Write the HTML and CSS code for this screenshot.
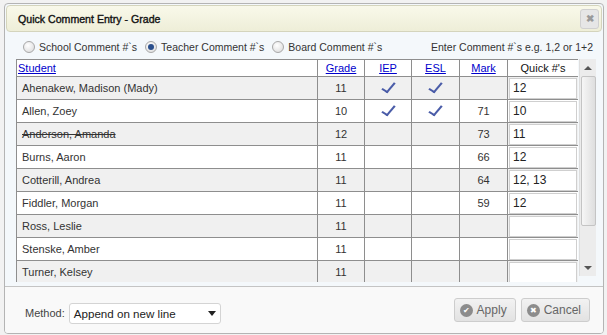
FILE: index.html
```html
<!DOCTYPE html>
<html lang="en">
<head>
    <meta charset="UTF-8">
    <title>Quick Comment Entry - Grade</title>
    <link rel="stylesheet" href="styles.css">
</head>
<body>
    <div class="dialog">
        <div class="titlebar">
            <span class="title">Quick Comment Entry - Grade</span>
            <span class="close-btn">&#10006;</span>
        </div>

        <div class="options">
            <label class="radio"><span class="dot"></span>School Comment #`s</label>
            <label class="radio"><span class="dot checked"></span>Teacher Comment #`s</label>
            <label class="radio"><span class="dot"></span>Board Comment #`s</label>
            <span class="hint">Enter Comment #`s e.g. 1,2 or 1+2</span>
        </div>

        <div class="grid-wrap">
            <div class="grid-scroll">
                <table class="grid">
                    <colgroup>
                        <col class="c-name">
                        <col class="c-grade">
                        <col class="c-flag">
                        <col class="c-flag2">
                        <col class="c-mark">
                        <col class="c-quick">
                    </colgroup>
                    <thead>
                        <tr>
                            <th class="h-name"><a href="#">Student</a></th>
                            <th><a href="#">Grade</a></th>
                            <th><a href="#">IEP</a></th>
                            <th><a href="#">ESL</a></th>
                            <th><a href="#">Mark</a></th>
                            <th>Quick #'s</th>
                        </tr>
                    </thead>
                    <tbody>
                        <tr><td>Ahenakew, Madison (Mady)</td><td>11</td><td><span class="tick"></span></td><td><span class="tick"></span></td><td></td><td><div class="qbox">12</div></td></tr>
                        <tr><td>Allen, Zoey</td><td>10</td><td><span class="tick"></span></td><td><span class="tick"></span></td><td>71</td><td><div class="qbox">10</div></td></tr>
                        <tr><td><s>Anderson, Amanda</s></td><td>12</td><td></td><td></td><td>73</td><td><div class="qbox">11</div></td></tr>
                        <tr><td>Burns, Aaron</td><td>11</td><td></td><td></td><td>66</td><td><div class="qbox">12</div></td></tr>
                        <tr><td>Cotterill, Andrea</td><td>11</td><td></td><td></td><td>64</td><td><div class="qbox">12, 13</div></td></tr>
                        <tr><td>Fiddler, Morgan</td><td>11</td><td></td><td></td><td>59</td><td><div class="qbox">12</div></td></tr>
                        <tr><td>Ross, Leslie</td><td>11</td><td></td><td></td><td></td><td><div class="qbox"></div></td></tr>
                        <tr><td>Stenske, Amber</td><td>11</td><td></td><td></td><td></td><td><div class="qbox"></div></td></tr>
                        <tr><td>Turner, Kelsey</td><td>11</td><td></td><td></td><td></td><td><div class="qbox"></div></td></tr>
                    </tbody>
                </table>
            </div>
            <div class="scrollbar">
                <span class="arrow up"></span>
                <div class="thumb"></div>
                <span class="arrow down"></span>
            </div>
        </div>

        <div class="footer">
            <span class="method-label">Method:</span>
            <div class="select">Append on new line<span class="caret"></span></div>
            <div class="buttons">
                <button class="btn"><span class="btn-icon">&#10004;</span>Apply</button>
                <button class="btn"><span class="btn-icon">&#10006;</span>Cancel</button>
            </div>
        </div>
    </div>
</body>
</html>
```

FILE: styles.css
```css
body {
    margin: 0;
    padding: 3px 3px 0 4px;
    background: #f2f2f2;
    font-family: 'Liberation Sans', Arial, sans-serif;
    font-size: 11px;
    color: #333;
}

.dialog {
    width: 598px;
    height: 329px;
    border: 1px solid #b4b4b4;
    border-radius: 4px;
    background: #f4f8fb;
    display: flex;
    flex-direction: column;
    overflow: hidden;
}

.titlebar {
    margin: 1px 1px 0 1px;
    height: 25px;
    border: 1px solid #d4d4bc;
    border-radius: 4px;
    background: linear-gradient(#f9f9ea, #eeeed8);
    display: flex;
    align-items: center;
    justify-content: space-between;
    padding: 0 2px 0 11px;
}

.title {
    font-size: 10.6px;
    color: #111;
    -webkit-text-stroke: 0.35px #111;
}

.close-btn {
    width: 17px;
    height: 18px;
    border: 1px solid #d0d0d0;
    border-radius: 3px;
    background: #e6e6e6;
    color: #9a9a9a;
    font-size: 10px;
    font-weight: bold;
    display: flex;
    align-items: center;
    justify-content: center;
}

.options {
    display: flex;
    align-items: center;
    height: 27px;
    padding: 2px 10px 0 18px;
    box-sizing: border-box;
    color: #333;
    font-size: 10.5px;
    white-space: nowrap;
}

.radio {
    display: flex;
    align-items: center;
    margin-right: 8px;
}

.dot {
    width: 10px;
    height: 10px;
    border: 1px solid #a8a8a8;
    border-radius: 50%;
    background: radial-gradient(circle at 40% 35%, #ffffff, #d8d8d8);
    margin-right: 4px;
    position: relative;
}

.dot.checked::after {
    content: "";
    position: absolute;
    left: 2px;
    top: 2px;
    width: 6px;
    height: 6px;
    border-radius: 50%;
    background: #2a4f8c;
}

.hint {
    margin-left: auto;
}

.grid-wrap {
    display: flex;
    margin-left: 11px;
    height: 223px;
}

.grid-scroll {
    width: 562px;
    overflow: hidden;
}

.grid {
    border-collapse: collapse;
    width: 562px;
    table-layout: fixed;
}

.c-name { width: 301px; }
.c-grade { width: 47px; }
.c-flag { width: 47px; }
.c-flag2 { width: 48px; }
.c-mark { width: 48px; }
.c-quick { width: 71px; }

.grid th,
.grid td {
    border: 1px solid #8e8e8e;
    padding: 0 4px;
    text-align: center;
    font-weight: normal;
    white-space: nowrap;
    overflow: hidden;
}

.grid th {
    height: 16px;
    background: #fff;
    color: #111;
}

.grid th a {
    color: #0000cc;
}

.grid th.h-name {
    text-align: left;
    padding-left: 1px;
}

.grid td {
    height: 22px;
}

.grid td:first-child {
    text-align: left;
    padding-left: 5px;
}

.grid tbody tr:nth-child(odd) {
    background: #f0f0f0;
}

.grid tbody tr:nth-child(even) {
    background: #fff;
}

.grid td:last-child {
    padding: 0 1px;
}

.qbox {
    height: 19px;
    border: 1px solid #cfcfcf;
    background: #fff;
    text-align: left;
    padding-left: 3px;
    line-height: 19px;
    color: #222;
    font-size: 12px;
}

.tick {
    display: inline-block;
    width: 5px;
    height: 11px;
    border-right: 2px solid #4a5ca8;
    border-bottom: 2px solid #4a5ca8;
    transform: rotate(40deg) skewY(-8deg);
    margin-bottom: 2px;
}

.scrollbar {
    width: 16px;
    height: 217px;
    margin-left: 1px;
    background: #ececec;
    border-left: 1px solid #dedede;
    display: flex;
    flex-direction: column;
    align-items: center;
}

.arrow {
    width: 0;
    height: 0;
    border-left: 4px solid transparent;
    border-right: 4px solid transparent;
    margin: 7px 0 6px;
}

.arrow.up {
    border-bottom: 4px solid #555;
}

.arrow.down {
    border-top: 4px solid #555;
    margin-top: auto;
}

.thumb {
    width: 13px;
    height: 148px;
    border: 1px solid #c4c4c4;
    border-radius: 2px;
    background: linear-gradient(to right, #f6f6f6, #dedede);
}

.footer {
    margin-top: 4px;
    flex: 1;
    border-top: 1px solid #c4c4c4;
    background: #f9f9f9;
    display: flex;
    align-items: center;
    padding: 0 13px 0 20px;
    color: #444;
    font-size: 11px;
}

.method-label {
    margin-right: 4px;
    margin-top: 6px;
}

.select {
    width: 142px;
    height: 19px;
    border: 1px solid #d4d4d4;
    border-radius: 3px;
    background: #fff;
    padding: 0 4px;
    line-height: 19px;
    font-size: 11.6px;
    color: #222;
    display: flex;
    align-items: center;
    justify-content: space-between;
    margin-top: 6px;
}

.caret {
    width: 0;
    height: 0;
    border-left: 4px solid transparent;
    border-right: 4px solid transparent;
    border-top: 5px solid #222;
}

.buttons {
    margin-left: auto;
    display: flex;
    gap: 5px;
}

.btn {
    height: 24px;
    border: 1px solid #cdcdcd;
    border-radius: 3px;
    background: linear-gradient(#f2f2f2, #e2e2e2);
    font-family: 'Liberation Sans', Arial, sans-serif;
    font-size: 12px;
    color: #666;
    padding: 0 8px 0 5px;
    display: flex;
    align-items: center;
}

.btn-icon {
    width: 13px;
    height: 13px;
    border-radius: 50%;
    background: #8c8c8c;
    color: #fff;
    font-size: 8px;
    display: flex;
    align-items: center;
    justify-content: center;
    margin-right: 4px;
}
```
